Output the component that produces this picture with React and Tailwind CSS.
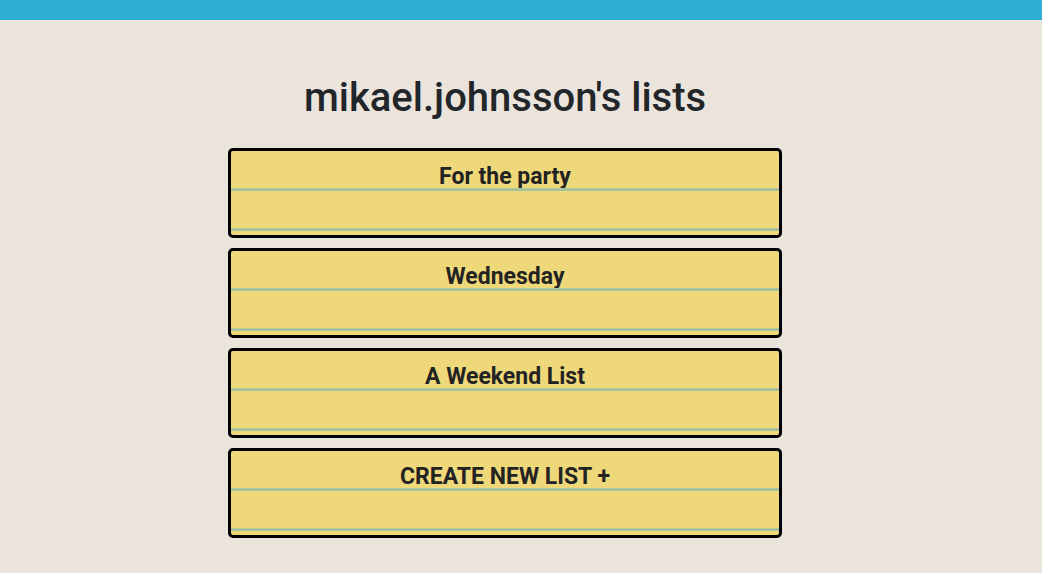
const lists = ["For the party", "Wednesday", "A Weekend List"];

function ListCard({ title }) {
  return (
    <div className="h-[90px] rounded-[5px] border-[3px] border-black bg-[#efd87a] flex flex-col">
      <div className="h-[37px] flex items-end justify-center text-[23px] font-bold leading-none text-[#232323]">
        {title}
      </div>
      <div className="h-[3px] bg-gradient-to-b from-[#c6cd8c] via-[#98bfa4] to-[#b4c894]" />
      <div className="h-[37px]" />
      <div className="h-[3px] bg-gradient-to-b from-[#c6cd8c] via-[#98bfa4] to-[#b4c894]" />
    </div>
  );
}

export default function App() {
  return (
    <div className="min-h-[573px] bg-[#ebe4dc] font-['Roboto',sans-serif]">
      <div className="h-5 bg-[#2eafd6]" />
      <div className="w-[554px] ml-[228px] flex flex-col gap-[10px]">
        <h1 className="mt-[55px] mb-[17px] text-center text-[40px] font-medium leading-[46px] text-[#222529]">
          mikael.johnsson's lists
        </h1>
        {lists.map((l) => (
          <ListCard key={l} title={l} />
        ))}
        <ListCard title="CREATE NEW LIST +" />
      </div>
    </div>
  );
}
